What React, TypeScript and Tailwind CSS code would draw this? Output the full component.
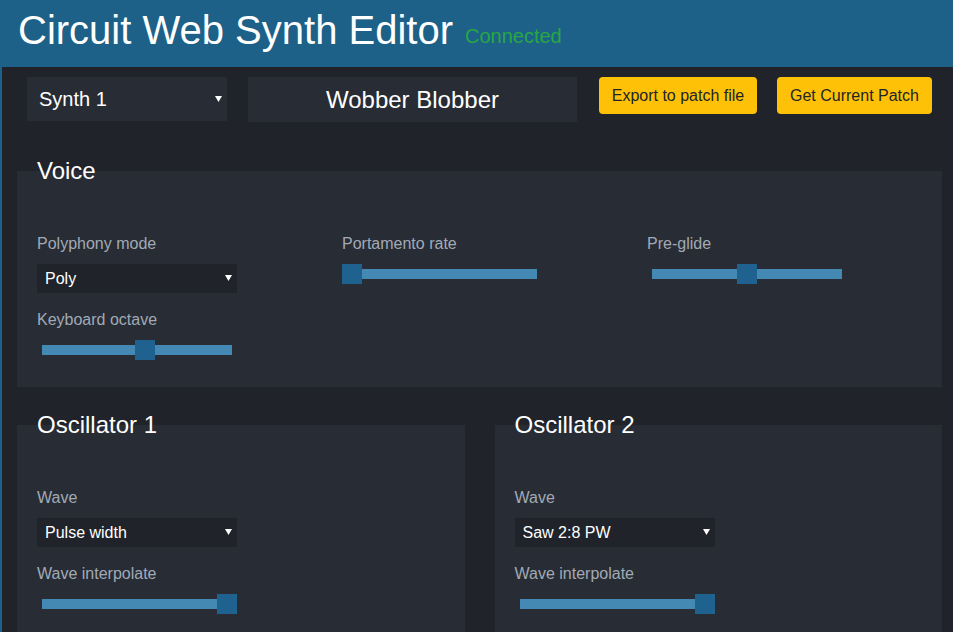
import React from 'react'

function Arrow() {
  return (
    <svg width="7" height="6" viewBox="0 0 7 6" className="shrink-0">
      <path d="M0 0 H7 L3.5 6 Z" fill="#ffffff" />
    </svg>
  )
}

function Select({ value }: { value: string }) {
  return (
    <div className="w-[200px] h-[29px] bg-[#20232a] flex items-center justify-between pl-[8px] pr-[5px] text-[16px] text-white">
      <span className="pt-[2px]">{value}</span>
      <Arrow />
    </div>
  )
}

function Slider({ value }: { value: number }) {
  // value 0..1, thumb travels 180px inside a 200px control
  return (
    <div className="relative w-[200px] h-[20px] flex items-center">
      <div className="mx-[5px] h-[10px] w-[190px] bg-[#4389b3]" />
      <div
        className="absolute top-0 w-[20px] h-[20px] bg-[#1f6290]"
        style={{ left: Math.round(value * 180) }}
      />
    </div>
  )
}

function Field({ label, children }: { label: string; children: React.ReactNode }) {
  return (
    <div>
      <div className="text-[16px] leading-6 text-[#a1aab6] mb-2">{label}</div>
      {children}
    </div>
  )
}

function Panel({ title, children }: { title: string; children: React.ReactNode }) {
  return (
    <fieldset className="bg-[#282c34] px-[20px] pb-[27px] min-w-0">
      <legend className="text-[24px] leading-[1.2] text-white">{title}</legend>
      <div className="pt-[46px]">{children}</div>
    </fieldset>
  )
}

export default function App() {
  return (
    <div className="bg-[#1d6189] min-h-screen font-['Liberation_Sans',Arial,sans-serif]">
      {/* Header */}
      <header className="h-[67px] px-[18px] pt-[6px] flex items-baseline">
        <h1 className="text-[40px] leading-[48px] text-white">Circuit Web Synth Editor</h1>
        <span className="ml-[12px] text-[20px] text-[#28a745] -translate-y-[1px]">Connected</span>
      </header>

      <main className="ml-[2px] bg-[#20232a] min-h-[565px] pt-[10px] pl-[15px] pr-[11px] pb-8">
        {/* Top controls */}
        <div className="flex items-start pl-[10px]">
          <div className="w-[200px] h-[44px] bg-[#282c34] flex items-center justify-between pl-[12px] pr-[5px] text-[20px] text-white">
            <span>Synth 1</span>
            <Arrow />
          </div>
          <div className="ml-[21px] w-[329px] h-[45px] bg-[#282c34] flex items-center justify-center text-[24px] text-white">
            Wobber Blobber
          </div>
          <button className="ml-[22px] w-[158px] bg-[#ffc107] text-[#212529] text-[16px] leading-6 py-[6.5px] rounded-[4px]">
            Export to patch file
          </button>
          <button className="ml-[20px] w-[155px] bg-[#ffc107] text-[#212529] text-[16px] leading-6 py-[6.5px] rounded-[4px]">
            Get Current Patch
          </button>
        </div>

        {/* Voice */}
        <div className="mt-[35px]">
          <Panel title="Voice">
            <div className="grid grid-cols-[305px_305px_1fr]">
              <div className="flex flex-col gap-[15px]">
                <Field label="Polyphony mode">
                  <Select value="Poly" />
                </Field>
                <Field label="Keyboard octave">
                  <Slider value={0.545} />
                </Field>
              </div>
              <div>
                <Field label="Portamento rate">
                  <Slider value={0} />
                </Field>
              </div>
              <div>
                <Field label="Pre-glide">
                  <Slider value={0.5} />
                </Field>
              </div>
            </div>
          </Panel>
        </div>

        {/* Oscillators */}
        <div className="mt-[24px] grid grid-cols-2 gap-[30px]">
          <Panel title="Oscillator 1">
            <div className="flex flex-col gap-[15px]">
              <Field label="Wave">
                <Select value="Pulse width" />
              </Field>
              <Field label="Wave interpolate">
                <Slider value={1} />
              </Field>
            </div>
          </Panel>
          <Panel title="Oscillator 2">
            <div className="flex flex-col gap-[15px]">
              <Field label="Wave">
                <Select value="Saw 2:8 PW" />
              </Field>
              <Field label="Wave interpolate">
                <Slider value={1} />
              </Field>
            </div>
          </Panel>
        </div>
      </main>
    </div>
  )
}
